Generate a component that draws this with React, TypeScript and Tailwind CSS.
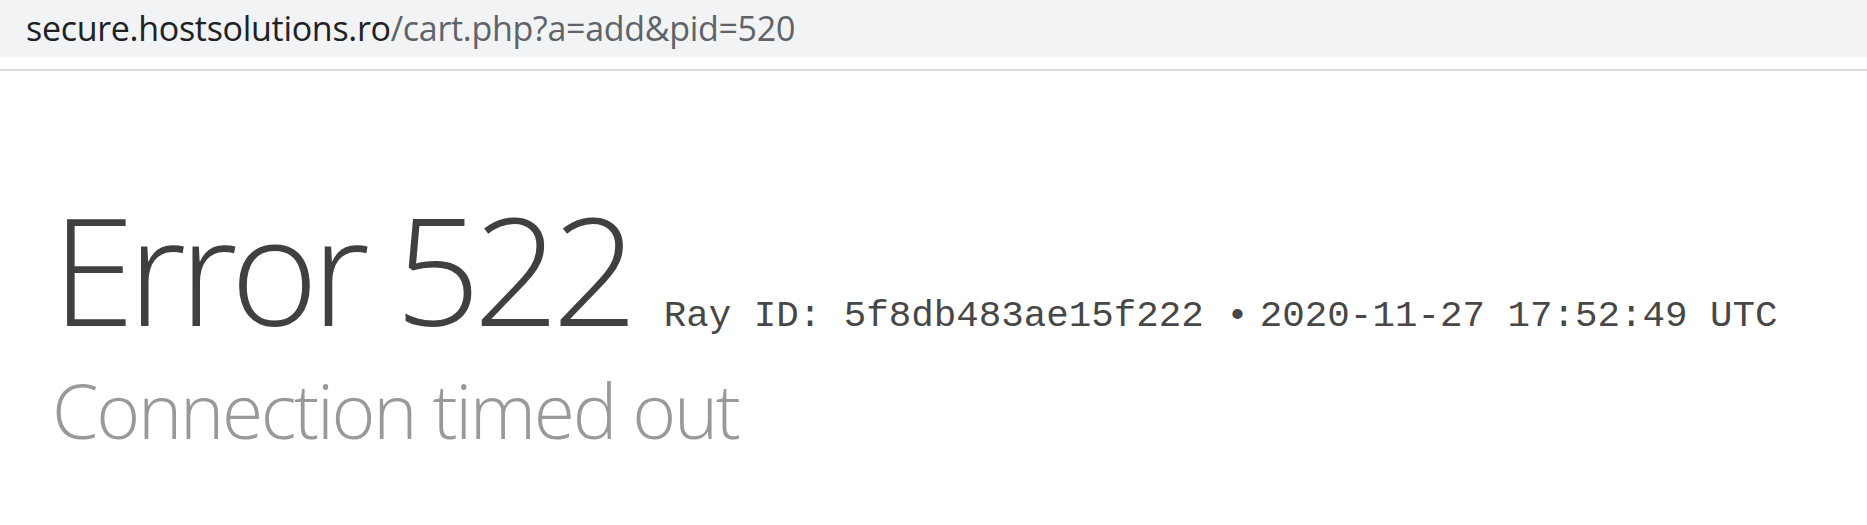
import React from "react";

export default function App() {
  return (
    <div className="w-[1867px] h-[525px] bg-white overflow-hidden flex flex-col">
      <div className="h-[57px] bg-[#f1f3f4] flex items-center pl-[26px] shrink-0">
        <div
          className="text-[34px] leading-none tracking-[-0.3px] pb-[2px]"
          style={{ fontFamily: '"Open Sans", "Noto Sans", sans-serif' }}
        >
          <span className="text-[#202124]">secure.hostsolutions.ro</span>
          <span className="text-[#5f6368]">/cart.php?a=add&amp;pid=520</span>
        </div>
      </div>
      <div className="h-[12px] shrink-0" />
      <div className="h-[2px] bg-[#dadce0] shrink-0" />
      <div className="pl-[52px] pt-[122px]">
        <div className="flex items-baseline">
          <h1
            className="text-[150px] leading-none font-light text-[#404040] tracking-[-7px] mr-[33px]"
            style={{ fontFamily: '"Open Sans", "Noto Sans", sans-serif' }}
          >
            Error 522
          </h1>
          <div
            className="flex items-baseline text-[37.5px] leading-none text-[#474747]"
            style={{ fontFamily: '"Liberation Mono", "Courier New", monospace' }}
          >
            <span>Ray ID: 5f8db483ae15f222 •</span>
            <span className="ml-[11px]">2020-11-27 17:52:49 UTC</span>
          </div>
        </div>
        <h2
          className="text-[75px] leading-none font-light text-[#999999] tracking-[-2.3px] mt-[30px]"
          style={{ fontFamily: '"Open Sans", "Noto Sans", sans-serif' }}
        >
          Connection timed out
        </h2>
      </div>
    </div>
  );
}
